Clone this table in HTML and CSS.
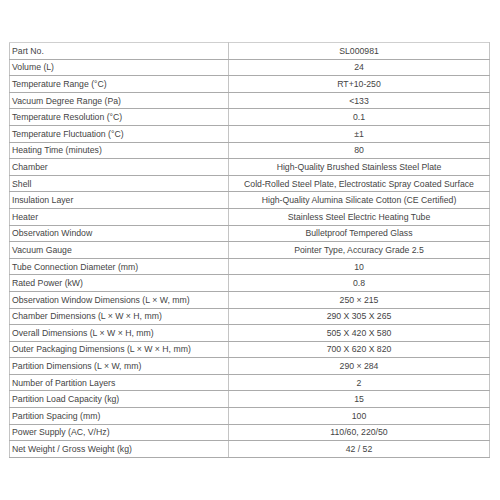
FILE: index.html
```html
<!DOCTYPE html>
<html>
<head>
<meta charset="utf-8">
<link rel="stylesheet" href="styles.css">
</head>
<body>
<table class="spec">
<tr><td class="k">Part No.</td><td class="v">SL000981</td></tr>
<tr><td class="k">Volume (L)</td><td class="v">24</td></tr>
<tr><td class="k">Temperature Range (°C)</td><td class="v">RT+10-250</td></tr>
<tr><td class="k">Vacuum Degree Range (Pa)</td><td class="v">&lt;133</td></tr>
<tr><td class="k">Temperature Resolution (°C)</td><td class="v">0.1</td></tr>
<tr><td class="k">Temperature Fluctuation (°C)</td><td class="v">±1</td></tr>
<tr><td class="k">Heating Time (minutes)</td><td class="v">80</td></tr>
<tr><td class="k">Chamber</td><td class="v">High-Quality Brushed Stainless Steel Plate</td></tr>
<tr><td class="k">Shell</td><td class="v">Cold-Rolled Steel Plate, Electrostatic Spray Coated Surface</td></tr>
<tr><td class="k">Insulation Layer</td><td class="v">High-Quality Alumina Silicate Cotton (CE Certified)</td></tr>
<tr><td class="k">Heater</td><td class="v">Stainless Steel Electric Heating Tube</td></tr>
<tr><td class="k">Observation Window</td><td class="v">Bulletproof Tempered Glass</td></tr>
<tr><td class="k">Vacuum Gauge</td><td class="v">Pointer Type, Accuracy Grade 2.5</td></tr>
<tr><td class="k">Tube Connection Diameter (mm)</td><td class="v">10</td></tr>
<tr><td class="k">Rated Power (kW)</td><td class="v">0.8</td></tr>
<tr><td class="k">Observation Window Dimensions (L × W, mm)</td><td class="v">250 × 215</td></tr>
<tr><td class="k">Chamber Dimensions (L × W × H, mm)</td><td class="v">290 X 305 X 265</td></tr>
<tr><td class="k">Overall Dimensions (L × W × H, mm)</td><td class="v">505 X 420 X 580</td></tr>
<tr><td class="k">Outer Packaging Dimensions (L × W × H, mm)</td><td class="v">700 X 620 X 820</td></tr>
<tr><td class="k">Partition Dimensions (L × W, mm)</td><td class="v">290 × 284</td></tr>
<tr><td class="k">Number of Partition Layers</td><td class="v">2</td></tr>
<tr><td class="k">Partition Load Capacity (kg)</td><td class="v">15</td></tr>
<tr><td class="k">Partition Spacing (mm)</td><td class="v">100</td></tr>
<tr><td class="k">Power Supply (AC, V/Hz)</td><td class="v">110/60, 220/50</td></tr>
<tr><td class="k">Net Weight / Gross Weight (kg)</td><td class="v">42 / 52</td></tr>
</table>
</body>
</html>
```

FILE: styles.css
```css
html, body {
  margin: 0;
  background: #fff;
}
body {
  padding: 42px 0 0 9px;
  font-family: "Liberation Sans", Arial, sans-serif;
  font-size: 8.7px;
  color: #444;
}
.spec {
  border-collapse: collapse;
  width: 481px;
  table-layout: fixed;
  border: 1px solid #c4c4c4;
}
.spec tr {
  height: 16.6px;
}
.spec td {
  border-top: 1px solid #ababab;
  border-bottom: 1px solid #ababab;
  border-left: 1px solid #c4c4c4;
  border-right: 1px solid #c4c4c4;
  padding: 0 2px;
  white-space: nowrap;
  line-height: 12px;
}
.spec tr:first-child td {
  border-top-color: #cfcfcf;
}
.spec .k {
  width: 214px;
  text-align: left;
}
.spec .v {
  text-align: center;
}
```
